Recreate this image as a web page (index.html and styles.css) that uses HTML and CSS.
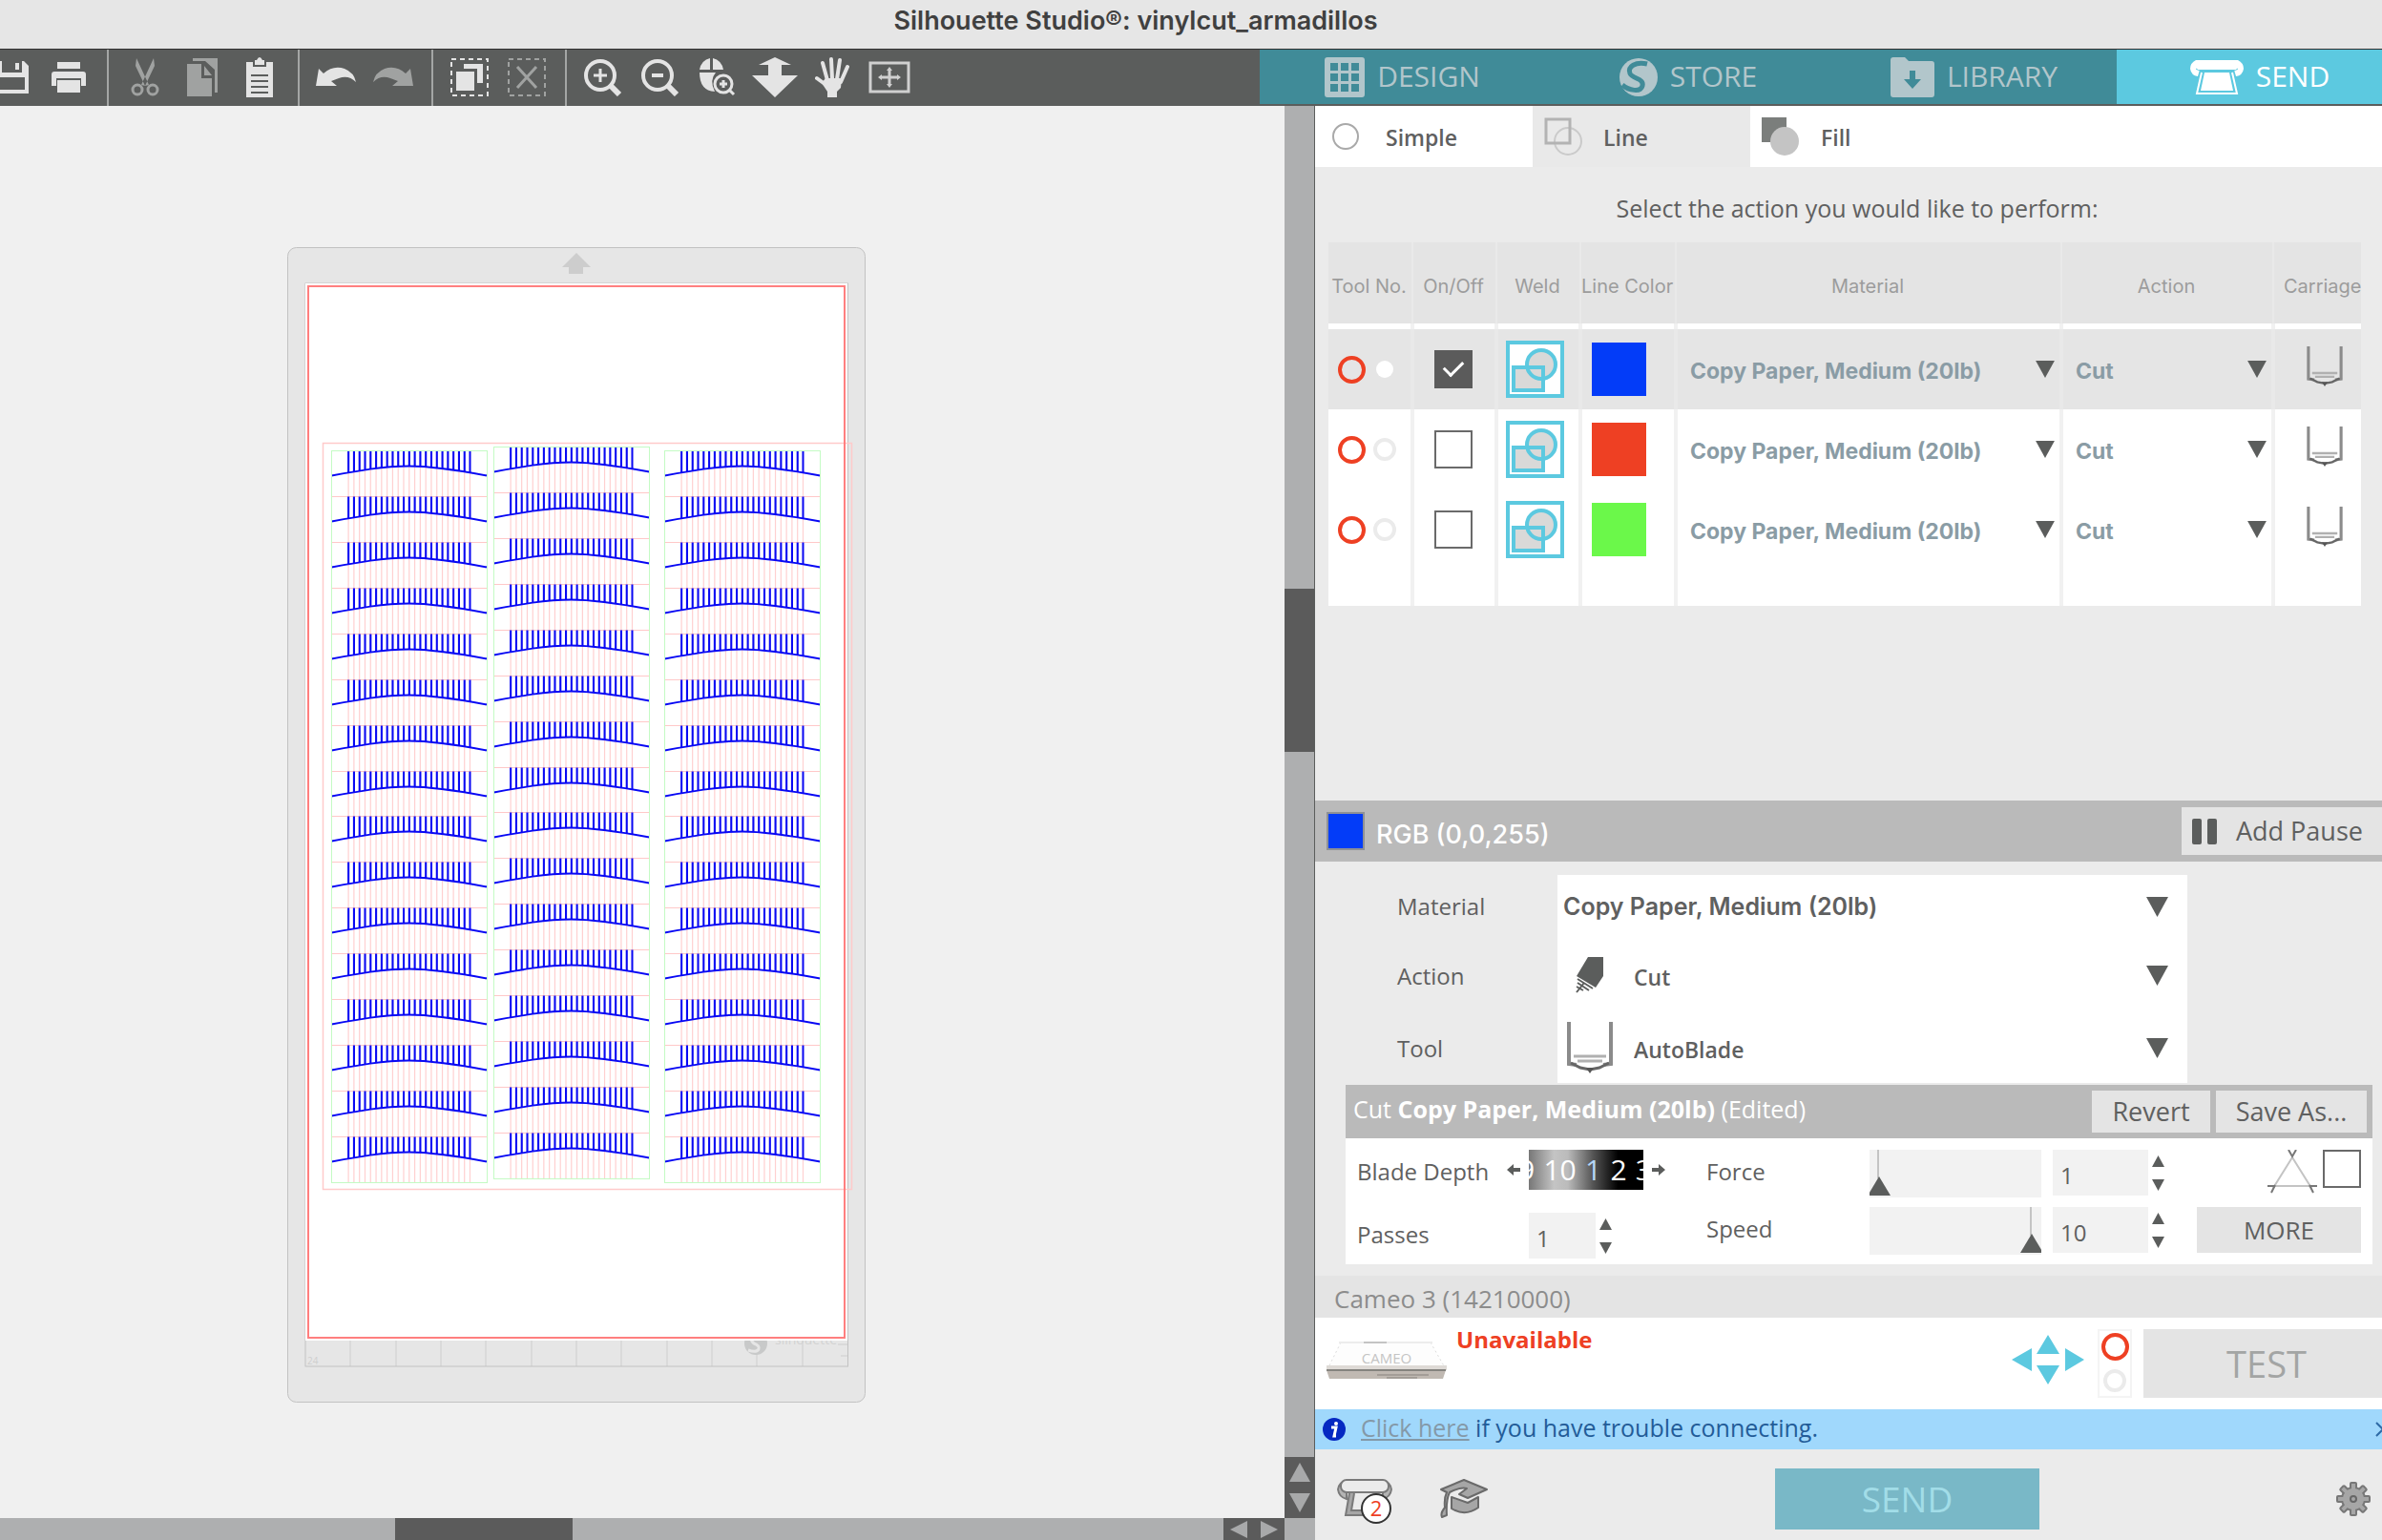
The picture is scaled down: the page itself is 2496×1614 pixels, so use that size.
FILE: index.html
```html
<!DOCTYPE html>
<html lang="en">
<head>
<meta charset="utf-8">
<title>Silhouette Studio®: vinylcut_armadillos</title>
<link rel="stylesheet" href="styles.css">
</head>
<body>
<svg class="defs" aria-hidden="true">
  <defs>
    <symbol id="i-down" viewBox="0 0 22 20"><path d="M0 0H22L11 20Z"/></symbol>
    <symbol id="i-up" viewBox="0 0 22 20"><path d="M0 20H22L11 0Z"/></symbol>
    <symbol id="i-weld" viewBox="0 0 61 60">
      <rect x="2" y="2" width="57" height="56" fill="#fff" stroke="#5cc9e0" stroke-width="4"/>
      <circle cx="37" cy="25" r="15" fill="#d9d9d8"/>
      <rect x="8" y="28" width="31" height="24" fill="#d9d9d8"/>
      <circle cx="37" cy="25" r="15" fill="none" stroke="#5cc9e0" stroke-width="4"/>
      <rect x="8" y="28" width="31" height="24" fill="none" stroke="#5cc9e0" stroke-width="4"/>
    </symbol>
    <symbol id="i-blade" viewBox="0 0 48 54">
      <path d="M2 0V44L10 45M46 0V44L38 45" fill="none" stroke="#8b8b8b" stroke-width="4"/>
      <path d="M7 36H41M11 41H37" stroke="#b0b0b0" stroke-width="3"/>
      <path d="M4 43L14 48L24 50L34 48L44 43" fill="none" stroke="#666" stroke-width="3"/>
      <path d="M20 48H28L24 54Z" fill="#555"/>
    </symbol>
    <clipPath id="above-arc"><path d="M0 -2V26C27 21 54 16 81 16S136 21 163 26V-2Z"/></clipPath>
    <g id="strip" fill="none">
      <path d="M0 0H163" stroke="#ffc8c8" stroke-width="1"/>
      <path d="M17 24H146" stroke="#ffd0d0" stroke-width="47" stroke-dasharray="1.2 4.59"/>
      <g clip-path="url(#above-arc)"><path d="M16.6 13H146" stroke="#0808f4" stroke-width="26" stroke-dasharray="2.1 3.69"/></g>
      <path d="M0 26C27 21 54 16 81 16S136 21 163 26" stroke="#0808f4" stroke-width="2"/>
    </g>
    <g id="column">
      <use href="#strip" y="0"/><use href="#strip" y="48"/><use href="#strip" y="96"/><use href="#strip" y="144"/>
      <use href="#strip" y="192"/><use href="#strip" y="240"/><use href="#strip" y="288"/><use href="#strip" y="336"/>
      <use href="#strip" y="383"/><use href="#strip" y="431"/><use href="#strip" y="479"/><use href="#strip" y="527"/>
      <use href="#strip" y="575"/><use href="#strip" y="623"/><use href="#strip" y="671"/><use href="#strip" y="719"/>
      <rect width="163" height="767" fill="none" stroke="#c4fbc4"/>
    </g>
  </defs>
</svg>

<div class="app">
  <header class="titlebar"><h1>Silhouette Studio®: vinylcut_armadillos</h1></header>

  <div class="topbar">
    <div class="tools" role="toolbar" aria-label="Tools">
      <div class="group group-first">
        <button class="tool" aria-label="Save"><svg width="36" height="34" viewBox="0 0 36 34"><path fill-rule="evenodd" d="M0 0H31L36 5V34H0ZM8 0V12H29V0ZM22 2H26V9H22ZM6 17V30H32V17Z"/></svg></button>
        <button class="tool" aria-label="Print"><svg width="36" height="32" viewBox="0 0 36 32"><path d="M6 0H30V7H6ZM3 10H33Q36 10 36 13V25H31V17H5V25H0V13Q0 10 3 10ZM6 19H30V32H6Z"/></svg></button>
      </div>
      <div class="group">
        <button class="tool off" aria-label="Cut"><svg width="30" height="40" viewBox="0 0 30 40"><path d="M6 0L19 28L15 29L5 8ZM24 0L11 28L15 29L25 8Z"/><circle cx="7" cy="33" r="5" fill="none" stroke="#a0a2a1" stroke-width="3"/><circle cx="23" cy="33" r="5" fill="none" stroke="#a0a2a1" stroke-width="3"/></svg></button>
        <button class="tool off" aria-label="Copy"><svg width="32" height="40" viewBox="0 0 32 40"><path d="M6 0H32V36H29V12L19 3H6ZM0 6H15V21H26V40H0ZM18 8L26 18H18Z"/></svg></button>
        <button class="tool" aria-label="Paste"><svg width="28" height="42" viewBox="0 0 28 42"><path fill-rule="evenodd" d="M0 5H7V10H21V5H28V42H0ZM5 18V20H23V18ZM5 24V26H23V24ZM5 30V32H23V30ZM5 36V38H23V36Z"/><path d="M9 8V3H11Q14 -3 17 3H19V8Z"/></svg></button>
      </div>
      <div class="group">
        <button class="tool" aria-label="Undo"><svg width="42" height="22" viewBox="0 0 42 22"><path d="M3 2L8 7Q18 -2 30 2Q40 6 42 16Q34 8 24 12L16 15L22 20H0Z"/></svg></button>
        <button class="tool off" aria-label="Redo"><svg width="42" height="22" viewBox="0 0 42 22"><path d="M39 2L34 7Q24 -2 12 2Q2 6 0 16Q8 8 18 12L26 15L20 20H42Z"/></svg></button>
      </div>
      <div class="group">
        <button class="tool" aria-label="Select all"><svg width="40" height="40" viewBox="0 0 40 40"><rect x="1" y="1" width="38" height="38" fill="none" stroke="#e4e4e4" stroke-width="2" stroke-dasharray="5 4"/><path d="M6 14H25V34H6ZM14 6H34V26H28V11H14Z"/></svg></button>
        <button class="tool off" aria-label="Deselect all"><svg width="40" height="40" viewBox="0 0 40 40" fill="none" stroke="#a0a2a1"><rect x="1" y="1" width="38" height="38" stroke-width="2" stroke-dasharray="5 4"/><path d="M10 9L30 31M30 9L10 31" stroke-width="3"/></svg></button>
      </div>
      <div class="group group-last">
        <button class="tool" aria-label="Zoom in"><svg width="40" height="40" viewBox="0 0 40 40" fill="none" stroke="#e4e4e4"><circle cx="17" cy="18" r="15" stroke-width="4"/><path d="M28 29L37 38" stroke-width="6"/><path d="M17 11V25M10 18H24" stroke-width="3"/></svg></button>
        <button class="tool" aria-label="Zoom out"><svg width="40" height="40" viewBox="0 0 40 40" fill="none" stroke="#e4e4e4"><circle cx="17" cy="18" r="15" stroke-width="4"/><path d="M28 29L37 38" stroke-width="6"/><path d="M11 18H23" stroke-width="4"/></svg></button>
        <button class="tool" aria-label="Zoom to selection"><svg width="38" height="40" viewBox="0 0 38 40"><path d="M0 12Q2 2 11 0V12ZM14 0Q23 2 25 12H14ZM0 15H17Q10 23 16 35Q0 34 0 15Z"/><circle cx="25" cy="27" r="9" fill="none" stroke="#e4e4e4" stroke-width="3"/><path d="M31 33L36 38M25 23V31M21 27H29" stroke="#e4e4e4" stroke-width="3"/></svg></button>
        <button class="tool" aria-label="Zoom drag"><svg width="48" height="42" viewBox="0 0 48 42"><path d="M24 0L41 8H31V19H48L24 42L0 19H17V8H7Z"/></svg></button>
        <button class="tool" aria-label="Pan"><svg width="36" height="42" viewBox="0 0 36 42" fill="none" stroke="#e4e4e4" stroke-width="4" stroke-linecap="round"><path d="M13 24L8 6M18 22L17 2M23 23L26 3M27 26L34 10M13 30L2 22"/><path d="M11 22H28L27 32L23 36V42H13V36L7 27Z" fill="#e4e4e4" stroke="none"/></svg></button>
        <button class="tool" aria-label="Fit to page"><svg width="44" height="34" viewBox="0 0 44 34"><path fill="none" stroke="#d0d0d0" stroke-width="3" d="M2 2H42V32H2ZM22 9V25M13 17H31"/><path d="M22 6L25 10H19ZM22 28L25 24H19ZM10 17L14 14V20ZM34 17L30 14V20Z" fill="#d0d0d0"/></svg></button>
      </div>
    </div>
    <nav class="modes">
      <a class="mode" href="#design"><svg width="42" height="42" viewBox="0 0 42 42"><path fill-rule="evenodd" d="M3 0H39Q42 0 42 3V39Q42 42 39 42H3Q0 42 0 39V3Q0 0 3 0ZM6 6V14H14V6ZM17 6V14H25V6ZM28 6V14H36V6ZM6 17V25H14V17ZM17 17V25H25V17ZM28 17V25H36V17ZM6 28V36H14V28ZM17 28V36H25V28ZM28 28V36H36V28Z"/></svg><span>DESIGN</span></a>
      <a class="mode" href="#store"><svg width="40" height="40" viewBox="0 0 40 40"><circle cx="20" cy="20" r="20"/><path d="M29 6C17 3 8 9 11 16C14 22 26 21 24 29C22 36 10 34 3 28" fill="none" stroke="#408b98" stroke-width="5"/></svg><span>STORE</span></a>
      <a class="mode" href="#library"><svg width="46" height="42" viewBox="0 0 46 42"><path fill-rule="evenodd" d="M3 0H15L19 4H43Q46 4 46 7V39Q46 42 43 42H3Q0 42 0 39V3Q0 0 3 0ZM20 14V23H14L23 33L32 23H26V14Z"/></svg><span>LIBRARY</span></a>
      <a class="mode active" href="#send"><svg width="56" height="36" viewBox="0 0 56 36"><path d="M6 0H50Q56 3 56 9Q55 16 48 17L46 10H10L8 17Q1 16 0 9Q0 3 6 0Z"/><rect x="5" y="0" width="46" height="9" rx="4"/><path d="M6 9Q8 11 12 11H44Q48 11 50 9" fill="none" stroke="#5cc9e0" stroke-width="1"/><path d="M15 13H41L45 32H11Z"/><path d="M12 13L7 35H49L44 13" fill="none" stroke="#fff" stroke-width="2"/></svg><span>SEND</span></a>
    </nav>
  </div>

  <div class="workspace">
    <main class="canvas">
      <svg class="mat" width="608" height="1213" viewBox="300 258 608 1213">
        <rect x="301.500" y="259.500" width="605" height="1210" rx="9" fill="#e6e6e6" stroke="#c2c2c2"/>
        <path d="M604 265L619 280H611V287H596V280H589Z" fill="#cdcdcd"/>
        <path d="M367 1400V1432M415 1400V1432M462 1400V1432M509 1400V1432M557 1400V1432M604 1400V1432M651 1400V1432M699 1400V1432M746 1400V1432M793 1400V1432M841 1400V1432M878 1409H888M881 1421H888" stroke="#d6d6d6" stroke-width="1.500"/>
        <rect x="320" y="297" width="568.500" height="1135" fill="none" stroke="#c2c2c2"/>
        <circle cx="792" cy="1408" r="12" fill="#c8c9c9"/>
        <path d="M797 1400C788 1398 785 1404 790 1408C799 1411 796 1419 784 1415" fill="none" stroke="#e6e6e6" stroke-width="3"/>
        <text x="812" y="1409" class="mat-brand">silhouette</text>
        <text x="322" y="1430" class="mat-mark">24</text>
        <rect x="320" y="297" width="568" height="1108" fill="#fff"/>
        <rect x="338.500" y="464.500" width="554" height="782" fill="none" stroke="#ffcaca" stroke-width="1.500"/>
        <rect x="323" y="300" width="562" height="1102" fill="none" stroke="#ff7f7f" stroke-width="2"/>
        <use href="#column" x="347.500" y="472.500"/>
        <use href="#column" x="517.500" y="468.500"/>
        <use href="#column" x="696.500" y="472.500"/>
      </svg>
    </main>
    <div class="vscroll">
      <span></span><div class="thumb"></div><span></span>
      <div class="arrows"><button aria-label="Scroll up"><svg width="22" height="20"><use href="#i-up"/></svg></button><button aria-label="Scroll down"><svg width="22" height="20"><use href="#i-down"/></svg></button></div>
    </div>
    <div class="hscroll">
      <span></span><div class="thumb"></div><span></span>
      <div class="arrows"><button aria-label="Scroll left"><svg width="18" height="18" viewBox="0 0 18 18"><path d="M18 0V18L0 9Z"/></svg></button><button aria-label="Scroll right"><svg width="18" height="18" viewBox="0 0 18 18"><path d="M0 0V18L18 9Z"/></svg></button></div>
    </div>
    <div class="corner"></div>

    <aside class="panel">
      <div class="tabs" role="tablist">
        <button class="tab" role="tab"><svg width="28" height="28" viewBox="0 0 28 28"><circle cx="14" cy="14" r="13" fill="#fff" stroke="#a9a9a9" stroke-width="2"/></svg><span>Simple</span></button>
        <button class="tab current" role="tab" aria-selected="true"><svg width="40" height="40" viewBox="0 0 40 40" fill="none"><circle cx="25" cy="25" r="14" stroke="#cacaca" stroke-width="2"/><rect x="2" y="2" width="25" height="25" stroke="#b3b3b3" stroke-width="3"/></svg><span>Line</span></button>
        <button class="tab" role="tab"><svg width="40" height="40" viewBox="0 0 40 40"><rect width="26" height="26" fill="#7b7e7c"/><circle cx="24" cy="25" r="15" fill="#c4c4c4"/></svg><span>Fill</span></button>
      </div>

      <section class="actions">
        <p class="prompt">Select the action you would like to perform:</p>
        <table class="lines">
          <colgroup><col class="w-tool"><col class="w-on"><col class="w-weld"><col class="w-color"><col><col class="w-action"><col class="w-carriage"></colgroup>
          <thead><tr><th>Tool No.</th><th>On/Off</th><th>Weld</th><th>Line Color</th><th>Material</th><th>Action</th><th>Carriage</th></tr></thead>
          <tbody>
            <tr class="gap"><td></td><td></td><td></td><td></td><td></td><td></td><td></td></tr>
            <tr class="selected">
              <td><div class="cell"><i class="ring"></i><i class="dot"></i></div></td>
              <td><div class="cell mid"><input type="checkbox" class="check" aria-label="Blue on" checked></div></td>
              <td><div class="cell weld"><button aria-label="Weld blue"><svg width="61" height="60"><use href="#i-weld"/></svg></button></div></td>
              <td><div class="cell color"><span class="swatch blue"></span></div></td>
              <td><div class="picker"><select aria-label="Material, blue"><option>Copy Paper, Medium (20lb)</option></select><svg width="20" height="18"><use href="#i-down"/></svg></div></td>
              <td><div class="picker"><select aria-label="Action, blue"><option>Cut</option></select><svg width="20" height="18"><use href="#i-down"/></svg></div></td>
              <td><div class="cell blade"><svg width="40" height="42"><use href="#i-blade"/></svg></div></td>
            </tr>
            <tr>
              <td><div class="cell"><i class="ring"></i><i class="ring idle"></i></div></td>
              <td><div class="cell mid"><input type="checkbox" class="check" aria-label="Red on"></div></td>
              <td><div class="cell weld"><button aria-label="Weld red"><svg width="61" height="60"><use href="#i-weld"/></svg></button></div></td>
              <td><div class="cell color"><span class="swatch red"></span></div></td>
              <td><div class="picker"><select aria-label="Material, red"><option>Copy Paper, Medium (20lb)</option></select><svg width="20" height="18"><use href="#i-down"/></svg></div></td>
              <td><div class="picker"><select aria-label="Action, red"><option>Cut</option></select><svg width="20" height="18"><use href="#i-down"/></svg></div></td>
              <td><div class="cell blade"><svg width="40" height="42"><use href="#i-blade"/></svg></div></td>
            </tr>
            <tr>
              <td><div class="cell"><i class="ring"></i><i class="ring idle"></i></div></td>
              <td><div class="cell mid"><input type="checkbox" class="check" aria-label="Green on"></div></td>
              <td><div class="cell weld"><button aria-label="Weld green"><svg width="61" height="60"><use href="#i-weld"/></svg></button></div></td>
              <td><div class="cell color"><span class="swatch green"></span></div></td>
              <td><div class="picker"><select aria-label="Material, green"><option>Copy Paper, Medium (20lb)</option></select><svg width="20" height="18"><use href="#i-down"/></svg></div></td>
              <td><div class="picker"><select aria-label="Action, green"><option>Cut</option></select><svg width="20" height="18"><use href="#i-down"/></svg></div></td>
              <td><div class="cell blade"><svg width="40" height="42"><use href="#i-blade"/></svg></div></td>
            </tr>
            <tr class="rest"><td></td><td></td><td></td><td></td><td></td><td></td><td></td></tr>
          </tbody>
        </table>
      </section>

      <div class="colorbar">
        <span class="chip"></span><h2>RGB (0,0,255)</h2>
        <button class="pause"><svg width="26" height="27" viewBox="0 0 26 27"><rect width="10" height="27" rx="2"/><rect x="16" width="10" height="27" rx="2"/></svg><span>Add Pause</span></button>
      </div>

      <div class="setup">
        <div class="setup-labels"><label for="material">Material</label><label for="action">Action</label><label for="tool">Tool</label></div>
        <div class="setup-fields">
          <div class="field"><select id="material" class="strong"><option>Copy Paper, Medium (20lb)</option></select><svg class="caret" width="23" height="21"><use href="#i-down"/></svg></div>
          <div class="field with-icon"><svg class="lead" width="30" height="38" viewBox="0 0 30 38"><path d="M13 0H29V20L21 32L1 20Z" fill="#5b5d5c"/><path d="M2 23L18 33M2 27L14 35M1 31L8 35M1 37L9 27" stroke="#5b5d5c" stroke-width="2"/></svg><select id="action"><option>Cut</option></select><svg class="caret" width="23" height="21"><use href="#i-down"/></svg></div>
          <div class="field with-icon"><svg class="lead" width="48" height="54"><use href="#i-blade"/></svg><select id="tool"><option>AutoBlade</option></select><svg class="caret" width="23" height="21"><use href="#i-down"/></svg></div>
        </div>
      </div>

      <section class="card">
        <div class="card-head">
          <h3>Cut <b>Copy Paper, Medium (20lb)</b> (Edited)</h3>
          <button class="plain revert">Revert</button><button class="plain save-as">Save As...</button>
        </div>
        <div class="card-body">
          <div class="left">
            <div class="line">
              <span class="name">Blade Depth</span>
              <div class="depth">
                <button aria-label="Shallower"><svg width="14" height="12" viewBox="0 0 14 12"><path d="M0 6L7 0V4H14V8H7V12Z"/></svg></button>
                <div class="dial"><span>9</span><span>10</span><span class="on">1</span><span>2</span><span>3</span></div>
                <button aria-label="Deeper"><svg width="14" height="12" viewBox="0 0 14 12"><path d="M14 6L7 0V4H0V8H7V12Z"/></svg></button>
              </div>
            </div>
            <div class="line">
              <label class="name" for="passes">Passes</label>
              <input id="passes" class="num short" type="text" value="1">
              <div class="spin"><button aria-label="More passes"><svg width="13" height="12"><use href="#i-up"/></svg></button><button aria-label="Fewer passes"><svg width="13" height="12"><use href="#i-down"/></svg></button></div>
            </div>
          </div>
          <div class="mid-col">
            <div class="line">
              <label class="name" for="force">Force</label>
              <div class="slider"><input id="force" type="range" min="1" max="33" value="1"></div>
              <input class="num" type="text" value="1" aria-label="Force value">
              <div class="spin"><button aria-label="More force"><svg width="13" height="12"><use href="#i-up"/></svg></button><button aria-label="Less force"><svg width="13" height="12"><use href="#i-down"/></svg></button></div>
            </div>
            <div class="line">
              <label class="name" for="speed">Speed</label>
              <div class="slider"><input id="speed" type="range" min="1" max="10" value="10"></div>
              <input class="num" type="text" value="10" aria-label="Speed value">
              <div class="spin"><button aria-label="Faster"><svg width="13" height="12"><use href="#i-up"/></svg></button><button aria-label="Slower"><svg width="13" height="12"><use href="#i-down"/></svg></button></div>
            </div>
          </div>
          <div class="right">
            <label class="overcut"><svg width="52" height="46" viewBox="0 0 52 46" fill="none"><path d="M26 8L6 40M26 8L46 40M5 38H47" stroke="#c4c4c4" stroke-width="2"/><path d="M22 0L26 7L30 0M0 38H8M44 38H52M8 37L4 45M44 37L48 45" stroke="#777" stroke-width="2"/></svg><input type="checkbox" class="check" aria-label="Line segment overcut"></label>
            <button class="plain more">MORE</button>
          </div>
        </div>
      </section>

      <section class="device">
        <h3>Cameo 3 (14210000)</h3>
        <div class="device-row">
          <svg width="128" height="48" viewBox="0 0 128 48">
            <path d="M16 2H110L127 32H1Z" fill="#fdfdfd"/><path d="M16 2L2 30M110 2L126 30" stroke="#dcdcdc" stroke-dasharray="2 3"/><path d="M14 2H112" stroke="#ececec" stroke-width="2"/><path d="M40 2H64" stroke="#c4c4c4" stroke-width="2"/>
            <text x="64" y="24" text-anchor="middle" class="cameo">CAMEO</text>
            <path d="M1 26H127V31H1Z" fill="#dedad6"/><path d="M1 31H126L123 40H4Z" fill="#c0b9b2"/><path d="M1 31H126" stroke="#85847f" stroke-width="2"/><path d="M64 39H96M54 36H108" stroke="#a39d97" stroke-width="2"/>
          </svg>
          <strong>Unavailable</strong>
          <button class="jog" aria-label="Move carriage"><svg width="76" height="52" viewBox="0 0 76 52" fill="#5cc9e0"><path d="M38 0L50 20H26ZM38 52L50 32H26ZM0 26L21 14V38ZM76 26L56 14V38Z"/></svg></button>
          <div class="rings"><i class="ring"></i><i class="ring idle"></i></div>
          <button class="test" disabled>TEST</button>
        </div>
        <div class="notice">
          <svg width="24" height="24" viewBox="0 0 24 24"><circle cx="12" cy="12" r="12" fill="#0528c2"/><circle cx="14" cy="6" r="2" fill="#fff"/><path d="M9 10H14L12 19H14" fill="none" stroke="#fff" stroke-width="3"/></svg>
          <p><a href="#help">Click here</a> if you have trouble connecting.</p>
          <button aria-label="Dismiss"><svg width="7" height="16" viewBox="0 0 7 16"><path d="M1 1L8 8L1 15" fill="none" stroke="#2e6aa6" stroke-width="2"/></svg></button>
        </div>
      </section>

      <footer class="foot">
        <button class="queue" aria-label="Machines"><svg width="58" height="48" viewBox="0 0 58 48"><path d="M12 2H46Q56 4 57 12Q56 20 48 22V14H10V22Q2 20 1 12Q2 4 12 2Z" fill="#b4b4b4" stroke="#7a7a7a" stroke-width="2"/><rect x="4" y="2" width="50" height="13" rx="6" fill="#ebebeb" stroke="#7a7a7a" stroke-width="2"/><path d="M13 16L9 39H30V34H15L18 16" fill="#a6a6a6" stroke="#7a7a7a" stroke-width="2"/><circle cx="41" cy="32" r="15" fill="#fff" stroke="#333" stroke-width="2"/><text x="41" y="40" text-anchor="middle" class="badge">2</text></svg></button>
        <button class="learn" aria-label="Tutorials"><svg width="50" height="42" viewBox="0 0 50 42" fill="#a6a6a6" stroke="#6a6a6a" stroke-width="2" stroke-linejoin="round"><path d="M1 11L25 1L49 11L29 20L20 16L28 10Q22 8 10 14Q6 22 7 38L2 40Q0 36 5 30Q4 20 7 14Z"/><path d="M12 19L29 25L40 19V30Q26 40 12 31Z"/></svg></button>
        <button class="send">SEND</button>
        <button class="gear" aria-label="Settings"><svg width="36" height="36" viewBox="0 0 36 36"><g fill="#777"><circle cx="18" cy="18" r="13"/><g id="teeth"><rect x="14" y="0" width="8" height="36" rx="2"/><rect x="0" y="14" width="36" height="8" rx="2"/></g><use href="#teeth" transform="rotate(45 18 18)"/></g><g fill="#a6a6a6"><circle cx="18" cy="18" r="11"/><g id="teeth-in"><rect x="16" y="2" width="4" height="32"/><rect x="2" y="16" width="32" height="4"/></g><use href="#teeth-in" transform="rotate(45 18 18)"/></g><circle cx="18" cy="18" r="3" fill="#a6a6a6" stroke="#666" stroke-width="2"/></svg></button>
      </footer>
    </aside>
  </div>
</div>
</body>
</html>
```
FILE: styles.css
```css
* { box-sizing: border-box; }

body {
  margin: 0;
  background: #ebebeb;
  color: #5f6060;
  font: 25px/32px "Open Sans", "Noto Sans", sans-serif;
}

h1, h2, h3, p { margin: 0; font: inherit; }

button, input, select {
  margin: 0;
  padding: 0;
  border: 0;
  border-radius: 0;
  background: none;
  color: inherit;
  font: inherit;
}

svg { display: block; flex: none; }
.defs { position: absolute; width: 0; height: 0; }

.app {
  display: flex;
  flex-direction: column;
  min-height: 100vh;
  overflow: hidden;
}

/* Title bar and toolbar */
.titlebar {
  display: flex;
  justify-content: center;
  align-items: center;
  height: 51px;
  padding: 0 116px 8px 0;
  background: #e6e6e6;
  color: #404040;
}
.titlebar h1 { font: 600 27px/32px Inter, sans-serif; }

.topbar {
  display: grid;
  grid-template-columns: minmax(0, 1320fr) minmax(0, 1176fr);
  align-items: start;
  height: 60px;
  border-top: 1px solid #303030;
  background: #5b5d5c;
}
.tools { display: flex; }
.group {
  display: flex;
  height: 59px;
  padding: 0 10px 2px 8px;
  border-right: 2px solid #a4a6a5;
}
.group-first { margin-left: -18px; padding-left: 0; }
.group-last { border: 0; }
.tool {
  display: grid;
  place-items: center;
  width: 60px;
  fill: #e4e4e4;
}
.tool.off { fill: #a0a2a1; }

.modes {
  display: grid;
  grid-template-columns: 299fr 300fr 299fr 278fr;
}
.mode {
  display: flex;
  justify-content: center;
  align-items: center;
  gap: 13px;
  height: 57px;
  background: #408b98;
  color: #b2c6cb;
  fill: #b2c6cb;
  font-size: 30px;
  font-weight: 500;
  text-decoration: none;
}
.mode span { padding-bottom: 2px; }
.mode.active {
  padding-left: 22px;
  background: #5cc9e0;
  color: #fff;
  fill: #fff;
}

/* Canvas and scroll bars */
.workspace {
  display: grid;
  grid-template-columns: minmax(0, 1346fr) 32px minmax(0, 1118fr);
  grid-template-rows: 1fr 23px;
  flex: 1;
}
.canvas {
  padding: 147px 0 0 300px;
  background: #f0f0f0;
}
.mat-brand { font: 14px "Open Sans", sans-serif; fill: #d3d3d3; }
.mat-mark { font: 10px "Open Sans", sans-serif; fill: #cfcfcf; }

.vscroll, .hscroll { display: grid; background: #aeafb0; }
.vscroll {
  grid-template-rows: 506fr 171fr 739fr 64px;
  border-right: 1px solid #5b5d5c;
}
.hscroll {
  grid-row: 2;
  grid-template-columns: 414fr 186fr 682fr 64px;
}
.thumb, .arrows { background: #5b5b5b; }
.arrows { display: flex; fill: #a8a9aa; }
.vscroll .arrows { flex-direction: column; }
.arrows button { display: grid; place-items: center; flex: 1; }
.corner { grid-row: 2; background: #aeafb0; }

/* Send panel */
.panel {
  display: flex;
  flex-direction: column;
  grid-column: 3;
  grid-row: 1 / 3;
  overflow: hidden;
  background: #ebebeb;
}
.tabs { display: flex; height: 64px; background: #fff; }
.tab {
  display: flex;
  align-items: center;
  gap: 22px;
  width: 228px;
  padding: 0 0 0 12px;
  font-size: 23px;
  font-weight: 600;
}
.tab span { padding-top: 2px; }
.tab:first-child { gap: 28px; padding-left: 18px; }
.tab.current { background: #e9e9e9; }

.actions { flex: 1; padding: 27px 22px 0 14px; }
.prompt { padding-left: 26px; text-align: center; }

.lines {
  width: 100%;
  margin-top: 20px;
  border-collapse: collapse;
  table-layout: fixed;
  background: #fff;
}
.w-tool, .w-on, .w-weld { width: 88px; }
.w-color { width: 100px; }
.w-action { width: 222px; }
.w-carriage { width: 92px; }
.lines th {
  height: 85px;
  padding: 6px 2px 0 0;
  overflow: hidden;
  background: #e4e4e4;
  border-right: 2px solid #e9e9e9;
  color: #9c9c9c;
  font: 20px/24px Inter, sans-serif;
  white-space: nowrap;
}
.lines td {
  height: 84px;
  padding: 0;
  border-right: 4px solid #f1f1f1;
}
.lines th:last-child { padding-left: 10px; text-align: left; }
.lines th:last-child, .lines td:last-child { border-right: 0; }
.lines .selected td { background: #e5e5e5; border-color: #e9e9e9; }
.lines .gap td { height: 6px; }
.lines .rest td { height: 38px; }
.cell { display: flex; align-items: center; gap: 8px; padding-left: 10px; }
.cell.mid { justify-content: center; padding: 0 2px 0 0; }
.cell.weld { padding-left: 8px; }
.cell.color { padding-left: 10px; }
.cell.blade { padding: 0 0 6px 32px; }

.ring {
  width: 29px;
  height: 29px;
  border: 4px solid #ee4023;
  border-radius: 50%;
}
.ring.idle { width: 24px; height: 24px; border-color: #ebebeb; }
.dot { width: 18px; height: 18px; margin: 0 3px; border-radius: 50%; background: #fff; }
.check {
  display: grid;
  place-items: center;
  width: 40px;
  height: 40px;
  appearance: none;
  border: 2px solid #6a6a6a;
  background: #fff;
}
.check:checked { border-color: #5b5b5b; background: #5b5b5b; }
.check:checked::before {
  content: "";
  width: 9px;
  height: 17px;
  margin-top: -6px;
  border: solid #fff;
  border-width: 0 3px 3px 0;
  rotate: 45deg;
}
.swatch { width: 57px; height: 56px; }
.blue { background: #033cf8; }
.red { background: #ee4023; }
.green { background: #6bf84a; }

select { appearance: none; width: 100%; }
.picker {
  display: grid;
  align-items: center;
  font: 700 23px/28px Inter, sans-serif;
  color: #8a9ca5;
}
.picker > * { grid-area: 1 / 1; }
.picker select { height: 80px; padding: 4px 40px 0 13px; }
.picker svg { justify-self: end; margin-right: 5px; fill: #5b5d5c; pointer-events: none; }

.colorbar {
  display: flex;
  align-items: center;
  gap: 12px;
  height: 64px;
  padding-left: 12px;
  background: #bababa;
  color: #fff;
}
.chip { width: 40px; height: 40px; border: 2px solid #8f9195; background: #033cf8; }
.colorbar h2 { flex: 1; padding-top: 8px; font: 500 27px/32px Inter, sans-serif; }
.pause {
  display: flex;
  align-items: center;
  gap: 20px;
  width: 210px;
  height: 50px;
  padding-left: 11px;
  background: #e4e4e4;
  color: #5f6060;
  fill: #5b5d5c;
  font-size: 27px;
}

.setup { display: flex; margin-top: 14px; font-size: 24px; }
.setup-labels {
  display: grid;
  grid-template-rows: 66px 80px 72px;
  align-items: center;
  width: 254px;
  padding-left: 86px;
}
.setup-fields {
  display: grid;
  grid-template-rows: 66px 78px 74px;
  flex: 1;
  margin-right: 204px;
  background: #fff;
}
.field { display: grid; align-items: center; }
.field > * { grid-area: 1 / 1; }
.field select { height: 66px; padding-left: 6px; }
.field .strong { font: 600 25px/32px Inter, sans-serif; }
.with-icon select { padding: 4px 0 0 80px; font-size: 23px; font-weight: 600; }
.caret { justify-self: end; margin-right: 20px; fill: #5b5d5c; pointer-events: none; }
.lead { width: 68px; pointer-events: none; }

/* Cut settings */
.card { margin: 2px 10px 12px 32px; background: #fff; }
.card-head {
  display: flex;
  align-items: center;
  gap: 6px;
  height: 56px;
  padding: 0 6px 0 8px;
  background: #bababa;
}
.card-head h3 { flex: 1; padding-bottom: 6px; color: #fff; }
.plain { background: #e4e4e4; font-size: 27px; }
.revert { width: 124px; height: 44px; }
.save-as { width: 158px; height: 44px; }
.card-body {
  display: flex;
  height: 132px;
  padding: 12px 12px 0 12px;
  font-size: 24px;
}
.left, .mid-col, .right { display: flex; flex-direction: column; gap: 12px; }
.left { width: 366px; gap: 18px; }
.mid-col { flex: 1; }
.right { align-items: flex-end; }
.line { display: flex; height: 48px; }
.name { line-height: 46px; }
.left .name { width: 180px; }
.mid-col .name { width: 171px; }
.depth { display: flex; gap: 8px; margin-left: -24px; height: 42px; fill: #5b5d5c; }
.depth button { display: grid; place-items: center; width: 16px; }
.dial {
  display: flex;
  justify-content: space-between;
  align-items: center;
  width: 120px;
  overflow: hidden;
  background: linear-gradient(90deg, #777 0, #c4c4c4 22%, #bbb 34%, #555 56%, #000 78%);
  color: #fff;
  font-size: 30px;
}
.dial span:first-child { margin-left: -11px; }
.dial span:last-child { margin-right: -9px; }
.dial .on { color: #b4d6f6; }
.num {
  width: 100px;
  height: 48px;
  padding: 4px 0 0 8px;
  background: #f2f2f2;
}
.num.short { width: 70px; }
.spin {
  display: flex;
  flex-direction: column;
  justify-content: center;
  gap: 13px;
  margin-left: 4px;
  fill: #5b5d5c;
}
.slider {
  display: flex;
  width: 180px;
  height: 50px;
  margin-right: 12px;
  overflow: hidden;
  background: #f2f2f2;
}
.slider input { flex: 1; min-width: 0; margin: 0 -3px; appearance: none; }
.slider input::-webkit-slider-thumb {
  width: 26px;
  height: 50px;
  appearance: none;
  background: url("data:image/svg+xml,%3Csvg xmlns='http://www.w3.org/2000/svg' width='26' height='50'%3E%3Cpath d='M12 0V30' stroke='%23c4c4c4' stroke-width='2'/%3E%3Cpath d='M13 28L25 48H1Z' fill='%235b5d5c'/%3E%3C/svg%3E");
}
.overcut { display: flex; gap: 6px; height: 48px; }
.more { width: 172px; height: 48px; font-size: 26px; }

/* Device */
.device h3 {
  height: 44px;
  padding: 4px 20px 0;
  background: #e4e4e4;
  color: #8c8c8c;
  font-size: 26px;
  line-height: 40px;
}
.device-row {
  display: flex;
  align-items: center;
  height: 96px;
  padding-left: 11px;
  background: #fff;
}
.device-row strong {
  flex: 1;
  align-self: flex-start;
  padding: 7px 0 0 9px;
  color: #ee4023;
  font-size: 24px;
}
.cameo { font: 15px "Open Sans", sans-serif; fill: #c4c4c4; }
.jog { margin: 0 14px 8px 0; }
.rings {
  display: flex;
  flex-direction: column;
  align-items: center;
  gap: 9px;
  width: 36px;
  height: 72px;
  padding-top: 2px;
  border: 2px solid #f4f4f4;
}
.test {
  width: 250px;
  height: 72px;
  margin-left: 12px;
  padding-left: 8px;
  background: #e4e4e4;
  color: #a3a5a4;
  font-size: 38px;
}
.notice {
  display: flex;
  align-items: center;
  height: 42px;
  padding-left: 8px;
  background: #a0d8fc;
  color: #235c98;
}
.notice p { flex: 1; padding: 0 0 4px 16px; }
.notice a { color: #8499a8; }

.foot {
  display: flex;
  align-items: center;
  height: 95px;
  padding: 0 12px 0 23px;
}
.queue { padding-top: 12px; }
.learn { margin: 0 auto 0 50px; padding-top: 8px; }
.badge { font: 22px "Open Sans", sans-serif; fill: #ee4023; }
.send {
  width: 277px;
  height: 64px;
  margin: 9px 0 0;
  background: #79b8c7;
  color: #a2dde8;
  font-size: 37px;
}
.gear { margin-left: 311px; padding-top: 8px; }
```
